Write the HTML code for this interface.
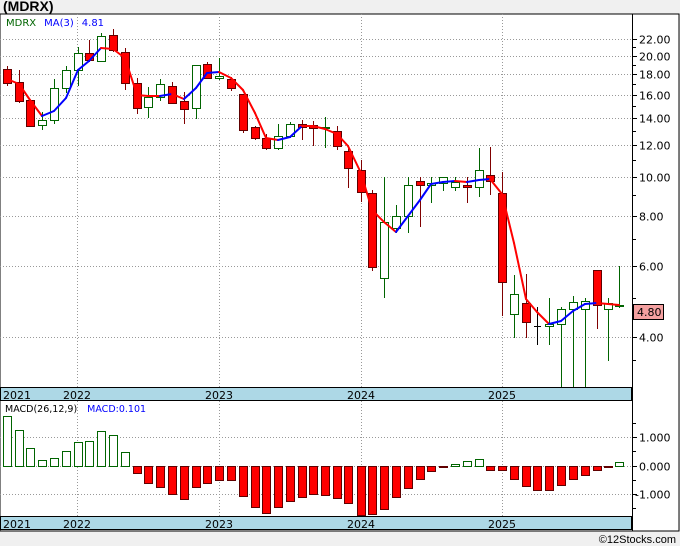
<!DOCTYPE html>
<html><head><meta charset="utf-8"><style>
html,body{margin:0;padding:0;background:#f0f0f0;width:680px;height:546px;overflow:hidden}
svg{display:block;font-family:"DejaVu Sans","Liberation Sans",sans-serif}
</style></head><body>
<svg id="s" width="680" height="546" xmlns="http://www.w3.org/2000/svg"></svg>
<script>
var s=document.getElementById('s');var h='';
function Y(p){return 337-174.8*Math.log(p/4);}
h+='<rect x="0" y="0" width="680" height="546" fill="#f0f0f0"/>';
h+='<rect x="0" y="14" width="679" height="517" fill="#fff" stroke="#000" stroke-width="1"/>';
h+='<text x="3" y="11" font-size="14" font-weight="bold" font-family="Liberation Sans,sans-serif">(MDRX)</text>';
[22,20,18,16,14,12,10,8,6,4].forEach(function(p){var y=Math.round(Y(p))+.5;
h+='<line x1="0" x2="632" y1="'+y+'" y2="'+y+'" stroke="#999" stroke-dasharray="1,2"/>';
h+='<line x1="632" x2="637" y1="'+y+'" y2="'+y+'" stroke="#000"/>';
h+='<text x="639" y="'+(y+4)+'" font-size="11" fill="#000">'+p.toFixed(2)+'</text>';});
[21,19,17,15,13,11,9,7,5,3.5,3].forEach(function(p){var y=Math.round(Y(p))+.5;if(y<387)h+='<line x1="632" x2="636" y1="'+y+'" y2="'+y+'" stroke="#000"/>';});
[77,219,361,502].forEach(function(x){h+='<line x1="'+(x+.5)+'" x2="'+(x+.5)+'" y1="14" y2="530" stroke="#999" stroke-dasharray="1,2"/>';});
var C=[[7,69,83,66,86,'r'],[19,82,101,70,103,'r'],[30,100,126,100,126,'r'],[42,120,125,112,130,'g'],[54,88,120,79,124,'g'],[66,70,88,66,93,'g'],[78,53,70,47,86,'g'],[89,53,60,40,62,'r'],[101,36,61,33,61,'g'],[113,35,50,29,52,'r'],[125,52,83,48,90,'r'],[137,83,108,78,114,'r'],[148,97,107,87,118,'g'],[160,84,97,79,101,'g'],[172,86,103,82,103,'r'],[184,101,109,92,124,'r'],[196,65,108,65,119,'g'],[207,64,78,62,79,'r'],[219,76,78,58,80,'g'],[231,79,88,77,91,'r'],[243,94,130,94,133,'r'],[255,127,138,126,140,'r'],[266,138,148,134,150,'r'],[278,136,148,124,150,'g'],[290,124,136,122,138,'g'],[302,124,127,120,140,'r'],[313,125,128,121,146,'r'],[325,127,128,117,148,'g'],[337,131,146,126,150,'r'],[348,151,168,146,188,'r'],[361,170,192,160,202,'r'],[372,193,267,190,271,'r'],[384,222,278,177,298,'g'],[396,216,228,205,233,'g'],[408,185,216,177,233,'g'],[420,181,185,177,227,'r'],[431,183,185,177,203,'g'],[443,177,183,177,191,'g'],[455,182,187,177,191,'g'],[467,185,187,177,203,'r'],[479,170,187,148,197,'g'],[490,175,181,147,195,'r'],[502,193,282,172,316,'r'],[514,294,314,275,338,'g'],[526,303,322,274,338,'r'],[537,326,326,307,345,'k'],[549,324,326,298,345,'g'],[561,309,324,307,387,'g'],[573,302,309,296,387,'g'],[585,301,309,298,387,'g'],[597,270,305,270,329,'r'],[608,303,309,298,361,'g'],[619,305,305,266,308,'g']];
C.forEach(function(c){var x=c[0],col=c[5];var wc=col=='r'?'#800000':col=='g'?'#006400':'#000';
h+='<line x1="'+(x+.5)+'" x2="'+(x+.5)+'" y1="'+c[3]+'" y2="'+c[4]+'" stroke="'+wc+'"/>';
if(col=='k'){h+='<line x1="'+(x-3)+'" x2="'+(x+4)+'" y1="'+(c[1]+.5)+'" y2="'+(c[1]+.5)+'" stroke="#000"/>';return;}
var hh=Math.max(1,c[2]-c[1]);
h+='<rect x="'+(x-3.5)+'" y="'+(c[1]+.5)+'" width="8" height="'+hh+'" fill="'+(col=='r'?'#ff0000':'#fff')+'" stroke="'+(col=='r'?'#600000':'#006400')+'"/>';});
var M=[[7,79],[19,84],[30,100],[42,116],[54,111],[66,98],[78,70],[89,61],[101,48],[113,49],[125,58],[137,95],[148,96],[160,96],[172,94],[184,99],[196,88],[207,73],[219,72],[231,78],[243,90],[255,113],[266,138],[278,140],[290,137],[302,126],[313,126],[325,129],[337,134],[348,146],[361,173],[372,210],[384,222],[396,232],[408,216],[420,200],[431,184],[443,182],[455,181],[467,182],[479,180],[490,179],[502,194],[514,243],[526,299],[537,312],[549,324],[561,321],[573,311],[585,304],[597,303],[608,304],[619,305]];
for(var i=1;i<M.length;i++){var up=M[i][1]<M[i-1][1];
h+='<line x1="'+M[i-1][0]+'" y1="'+M[i-1][1]+'" x2="'+M[i][0]+'" y2="'+M[i][1]+'" stroke="'+(up?'#0000ff':'#ff0000')+'" stroke-width="2" stroke-linecap="round"/>';}
h+='<text x="6" y="26" font-size="10"><tspan fill="#006400">MDRX</tspan><tspan fill="#0000ff" dx="8">MA(3)</tspan><tspan fill="#0000ff" dx="8">4.81</tspan></text>';
h+='<rect x="633.5" y="304.5" width="30" height="15" fill="#f4a0a0" stroke="#000"/><text x="637" y="316" font-size="11">4.80</text>';
function band(y){h+='<rect x="0.5" y="'+y+'.5" width="631" height="13" fill="#add8e6" stroke="#000"/>';
[['2021',3],['2022',63],['2023',205],['2024',347],['2025',488]].forEach(function(l){h+='<text x="'+l[1]+'" y="'+(y+12)+'" font-size="11">'+l[0]+'</text>';});}
band(387);band(516);
h+='<text x="5" y="412" font-size="9.5"><tspan fill="#000">MACD(26,12,9)</tspan><tspan fill="#0000ff" dx="10">MACD:0.101</tspan></text>';
[[1,437],[0,466],[-1,494]].forEach(function(v){var y=v[1]+.5;
h+='<line x1="0" x2="632" y1="'+y+'" y2="'+y+'" stroke="#999" stroke-dasharray="1,2"/><line x1="632" x2="637" y1="'+y+'" y2="'+y+'" stroke="#000"/>';
h+='<text x="'+(v[0]<0?635:639)+'" y="'+(y+4)+'" font-size="11">'+(v[0]<0?'-1.000':v[0].toFixed(3))+'</text>';});
[423,451,480,508].forEach(function(y){h+='<line x1="632" x2="636" y1="'+(y+.5)+'" y2="'+(y+.5)+'" stroke="#000"/>';});
var D=[416,430,448,460,458,451,442,441,431,435,452,473,483,487,494,499,487,483,480,480,496,507,513,507,501,497,494,495,498,503,515,514,509,497,488,479,471,467,464,461,459,470,470,479,486,490,490,485,479,475,470,467,462];
C.forEach(function(c,i){var v=D[i],x=c[0];var pos=v<466;var y=pos?v:466,ht=Math.max(1,Math.abs(v-466));
h+='<rect x="'+(x-3.5)+'" y="'+(y+.5)+'" width="8" height="'+ht+'" fill="'+(pos?'#fff':'#ff0000')+'" stroke="'+(pos?'#006400':'#600000')+'"/>';});
h+='<line x1="632.5" x2="632.5" y1="14" y2="531" stroke="#000"/>';
h+='<text x="676" y="543" font-size="11" text-anchor="end" font-family="Liberation Sans,sans-serif">©12Stocks.com</text>';
s.innerHTML=h;
</script>
</body></html>
